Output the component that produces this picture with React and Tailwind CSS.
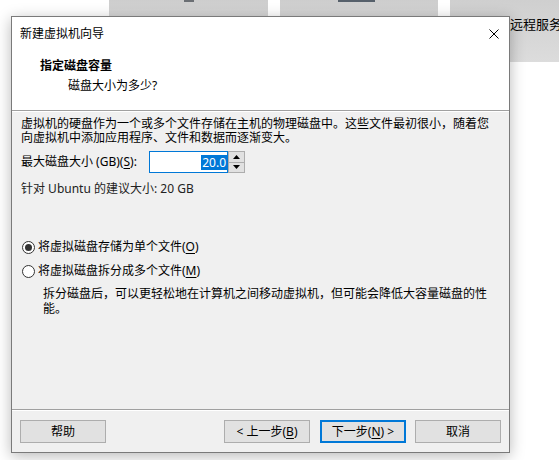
import React from "react";

const U = ({ children }) => <span className="underline underline-offset-2">{children}</span>;

function Button({ children, primary }) {
  return (
    <button
      className={
        primary
          ? "w-[86px] h-[23px] bg-[#e1e1e1] border-2 border-[#0078d7] text-[12px] leading-none text-black flex items-center justify-center"
          : "w-[86px] h-[23px] bg-[#e1e1e1] border border-[#adadad] text-[12px] leading-none text-black flex items-center justify-center"
      }
    >
      {children}
    </button>
  );
}

function Radio({ checked, children }) {
  return (
    <div className="flex items-center h-4 pl-[1px]">
      <span className="w-[13px] h-[13px] rounded-full border border-[#333] bg-white flex items-center justify-center">
        {checked && <span className="w-[7px] h-[7px] rounded-full bg-[#333]" />}
      </span>
      <span className="ml-[3px] leading-4">{children}</span>
    </div>
  );
}

export default function App() {
  return (
    <div className="relative w-[559px] h-[460px] overflow-hidden bg-white text-black font-['Noto_Sans','Noto_Sans_CJK_SC',sans-serif] text-[12px]">
      {/* desktop tiles behind the dialog */}
      <div className="absolute left-[109px] top-0 w-[159px] h-[16px] bg-gradient-to-b from-[#cdcdcd] to-[#d6d6d6]">
        <div className="absolute left-[75px] top-0 w-[10px] h-[2px] bg-[#6b6f74]" />
      </div>
      <div className="absolute left-[280px] top-0 w-[158px] h-[16px] bg-gradient-to-b from-[#cdcdcd] to-[#d6d6d6]">
        <div className="absolute left-[58px] top-0 w-[37px] h-[2px] bg-[#56606b]" />
      </div>
      <div className="absolute left-[450px] top-0 w-[109px] h-[62px] bg-gradient-to-b from-[#cfcfcf] to-[#dcdcdc] overflow-hidden">
        <div className="absolute left-[60px] top-[16px] text-[13px] leading-4 whitespace-nowrap">远程服务</div>
      </div>

      {/* dialog */}
      <div className="absolute left-[11px] top-[16px] w-[499px] h-[437px] border border-[#7a7a7a] bg-[#f0f0f0] flex flex-col shadow-[0_3px_14px_rgba(0,0,0,0.28)]">
        <div className="bg-white">
          <div className="relative h-[34px] flex items-center pl-[8px]">
            <span className="leading-4">新建虚拟机向导</span>
            <svg className="absolute right-[10px] top-[12px]" width="10" height="10" viewBox="0 0 10 10">
              <path d="M0.5 0.5 L9.5 9.5 M9.5 0.5 L0.5 9.5" stroke="#000" strokeWidth="1" fill="none" />
            </svg>
          </div>
          <div className="h-[59px] pt-[7px]">
            <div className="pl-[28px] font-bold leading-4">指定磁盘容量</div>
            <div className="pl-[56px] mt-[4px] leading-4">磁盘大小为多少?</div>
          </div>
        </div>
        <div className="h-px bg-[#a0a0a0]" />
        <div className="h-px bg-white" />

        <div className="flex-1 flex flex-col pl-[9px]">
          <div className="mt-[5px] leading-[14px]">
            <div className="whitespace-nowrap">虚拟机的硬盘作为一个或多个文件存储在主机的物理磁盘中。这些文件最初很小，随着您</div>
            <div className="whitespace-nowrap">向虚拟机中添加应用程序、文件和数据而逐渐变大。</div>
          </div>

          <div className="mt-[6px] flex items-center h-[22px]">
            <span className="w-[128px] leading-4 whitespace-nowrap">
              最大磁盘大小 (GB)(<U>S</U>):
            </span>
            <div className="w-[79px] h-[22px] border border-[#0078d7] bg-white flex items-center justify-end">
              <span className="bg-[#0078d7] text-white leading-[15px] px-px">20.0</span>
            </div>
            <div className="w-[17px] h-[22px] flex flex-col border border-[#adadad] bg-[#f0f0f0]">
              <div className="flex-1 flex items-center justify-center bg-[#e1e1e1] border-b border-[#adadad]">
                <svg width="7" height="4" viewBox="0 0 7 4"><path d="M3.5 0 L7 4 L0 4 Z" fill="#000" /></svg>
              </div>
              <div className="flex-1 flex items-center justify-center bg-[#e1e1e1]">
                <svg width="7" height="4" viewBox="0 0 7 4"><path d="M0 0 L7 0 L3.5 4 Z" fill="#000" /></svg>
              </div>
            </div>
          </div>

          <div className="mt-[8px] leading-4 text-[#222]">针对 Ubuntu 的建议大小: 20 GB</div>

          <div className="mt-[42px]">
            <Radio checked>
              将虚拟磁盘存储为单个文件(<U>O</U>)
            </Radio>
          </div>
          <div className="mt-[8px]">
            <Radio>
              将虚拟磁盘拆分成多个文件(<U>M</U>)
            </Radio>
          </div>
          <div className="mt-[7px] pl-[22px] leading-[15px]">
            <div className="whitespace-nowrap">拆分磁盘后，可以更轻松地在计算机之间移动虚拟机，但可能会降低大容量磁盘的性</div>
            <div>能。</div>
          </div>
        </div>

        <div className="h-px bg-[#a0a0a0]" />
        <div className="h-px bg-white" />
        <div className="flex items-center h-[23px] mt-[9px] mb-[9px] px-[8px]">
          <Button>帮助</Button>
          <div className="flex-1" />
          <Button>
            &lt; 上一步(<U>B</U>)
          </Button>
          <div className="w-[10px]" />
          <Button primary>
            下一步(<U>N</U>) &gt;
          </Button>
          <div className="w-[9px]" />
          <Button>取消</Button>
        </div>
      </div>
    </div>
  );
}
